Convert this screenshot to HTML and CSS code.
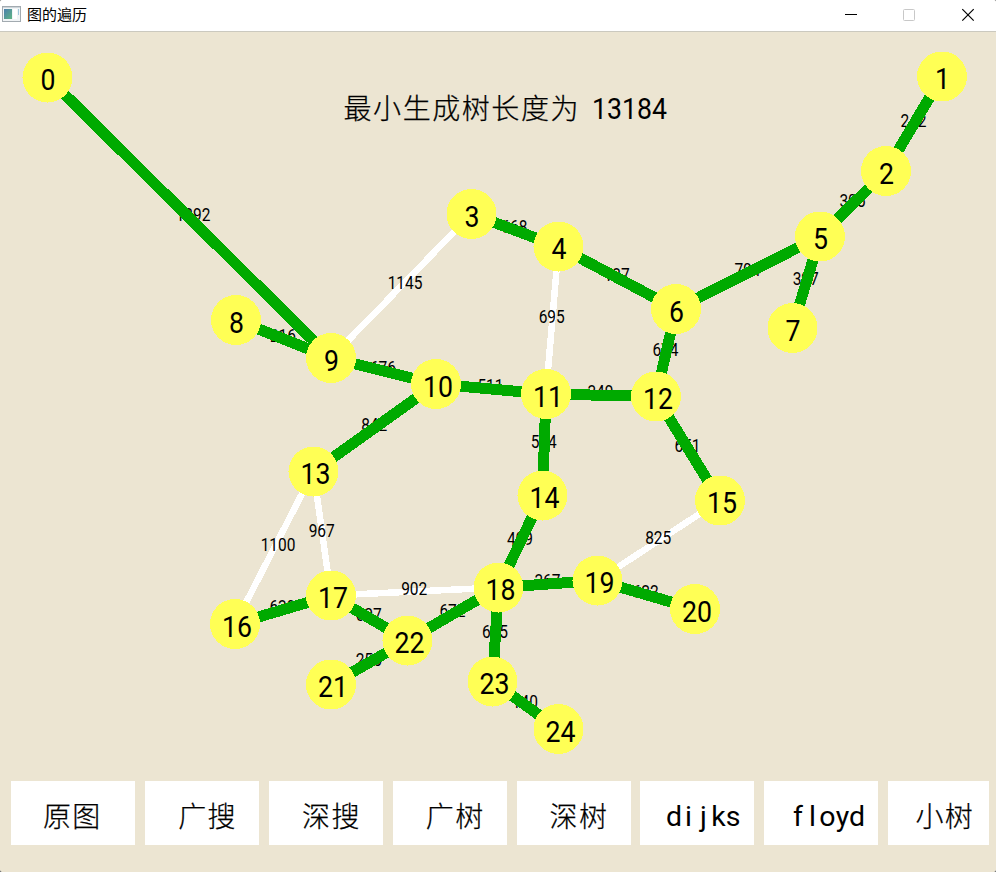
FILE: index.html
```html
<!DOCTYPE html>
<html lang="zh-CN">
<head>
<meta charset="utf-8">
<title>图的遍历</title>
<link rel="stylesheet" href="styles.css">
</head>
<body>
<div class="window">
  <header class="titlebar">
    <svg class="app-icon" width="19" height="16" viewBox="0 0 19 16">
      <defs><linearGradient id="pane" x1="0" y1="0" x2="1" y2="1"><stop offset="0" stop-color="#4b7fae"/><stop offset="1" stop-color="#5fb583"/></linearGradient></defs>
      <rect x=".5" y=".5" width="18" height="15" fill="#f1f4f6" stroke="#a2aab0"/>
      <rect x="1" y="1" width="17" height="1" fill="#cdd5da"/>
      <rect x="2" y="3" width="8" height="10" fill="url(#pane)"/>
      <rect x="11" y="3" width="4" height="10" fill="#fff"/>
      <rect x="16" y="3" width="1" height="6" fill="#9fc6dc"/>
    </svg>
    <h1 class="title">图的遍历</h1>
    <div class="controls">
      <svg width="58" height="31" viewBox="0 0 58 31"><path d="M17 14.5h12" stroke="#000"/></svg>
      <svg width="58" height="31" viewBox="0 0 58 31"><rect x="17.5" y="9.5" width="11" height="11" rx="1" fill="none" stroke="#c8c8c8"/></svg>
      <svg width="52" height="31" viewBox="0 0 52 31"><path d="M18.3 9.2l11.4 11.4M29.7 9.2L18.3 20.6" stroke="#000" stroke-width="1.2"/></svg>
    </div>
  </header>
  <main class="stage">
    <svg class="graph" id="graph" width="996" height="749" viewBox="0 32 996 749">
      <g id="links" class="links"></g>
      <g id="weights" class="weights"></g>
      <g id="tree" class="tree"></g>
      <g id="nodes" class="nodes"></g>
      <text class="caption" x="343.5" y="119" textLength="235" lengthAdjust="spacing">最小生成树长度为</text>
      <text class="caption digits" x="592" y="119" textLength="75" lengthAdjust="spacingAndGlyphs">13184</text>
    </svg>
    <nav class="toolbar">
      <button class="btn first">原图</button>
      <button class="btn">广搜</button>
      <button class="btn">深搜</button>
      <button class="btn">广树</button>
      <button class="btn">深树</button>
      <button class="btn latin"><svg width="114" height="64"><text x="34 48.5 63.5 78.5 93" y="45">dijks</text></svg></button>
      <button class="btn latin"><svg width="114" height="64"><text x="34 48.5 63.5 78.5 93" y="45">floyd</text></svg></button>
      <button class="btn last">小树</button>
    </nav>
  </main>
</div>
<script src="graph.js"></script>
</body>
</html>
```
FILE: styles.css
```css
* { box-sizing: border-box; }
body {
  margin: 0;
  background: #3d4650;
  font-family: "Noto Sans CJK SC", sans-serif;
  color: #000;
}
.window {
  width: 996px;
  height: 872px;
  display: flex;
  flex-direction: column;
  overflow: hidden;
  border-radius: 2px;
  background: #ece5d2;
}
.titlebar {
  height: 32px;
  flex: none;
  display: flex;
  align-items: flex-start;
  padding-left: 2px;
  background: #fff;
  border-bottom: 1px solid #cbc9bf;
}
.app-icon { margin-top: 6px; }
.title {
  margin: 0 0 0 6px;
  font-size: 15px;
  font-weight: 400;
  line-height: 27px;
}
.controls { display: flex; margin-left: auto; }
.stage { display: flex; flex-direction: column; }
.graph { display: block; flex: none; }
.links { stroke: #fff; stroke-width: 6.5; shape-rendering: crispEdges; }
.tree { stroke: #00aa00; stroke-width: 11; shape-rendering: crispEdges; }
.weights { font: 18.5px Roboto, sans-serif; }
.nodes { font: 30px Roboto, sans-serif; text-anchor: middle; }
.nodes circle { fill: #ffff55; shape-rendering: crispEdges; }
.caption { font: 300 28px "Noto Sans CJK SC", sans-serif; stroke: #000; stroke-width: .25; }
.caption.digits { font: 29.5px Roboto, sans-serif; stroke: none; }
.toolbar {
  display: grid;
  grid-template-columns: 124px repeat(6, 114px) 101px;
  column-gap: 9.8px;
  padding-left: 11.4px;
}
.btn {
  height: 64px;
  border: 0;
  padding: 3px 0 0 33px;
  background: #fff;
  color: #000;
  font: 300 28px/60px "Noto Sans CJK SC", sans-serif;
  -webkit-text-stroke: .25px #000;
  letter-spacing: 1.4px;
  text-align: left;
  white-space: nowrap;
}
.btn.first { padding-left: 31.5px; }
.btn.last { padding-left: 27.5px; }
.btn.latin { padding: 0; line-height: 0; letter-spacing: 0; -webkit-text-stroke: 0; }
.btn.latin text { font: 28.5px Roboto, sans-serif; text-anchor: middle; }
```
FILE: graph.js
```js
const nodes = [
  [47.5, 77.5], [942, 76.5], [886, 171], [471.5, 214], [558.5, 246.5],
  [820, 236.5], [676, 309], [792.5, 328], [236, 320], [331, 358],
  [436, 384], [546, 394], [656, 396.5], [313.5, 471.5], [542.5, 495.5],
  [720, 500.5], [235, 624], [331, 595.5], [498.5, 587.5], [597.5, 580.5],
  [695, 609], [331, 684.5], [407.5, 640.5], [492.5, 681.5], [558.5, 729]
];
// from, to, weight, in spanning tree
const edges = [
  [0, 9, 1892, 1], [1, 2, 242, 1], [2, 5, 305, 1], [5, 7, 397, 1],
  [5, 6, 704, 1], [3, 4, 668, 1], [4, 6, 137, 1], [3, 9, 1145, 0],
  [4, 11, 695, 0], [6, 12, 674, 1], [8, 9, 216, 1], [9, 10, 676, 1],
  [10, 11, 511, 1], [11, 12, 349, 1], [10, 13, 842, 1], [11, 14, 534, 1],
  [12, 15, 651, 1], [13, 16, 1100, 0], [13, 17, 967, 0], [15, 19, 825, 0],
  [14, 18, 409, 1], [17, 18, 902, 0], [18, 19, 367, 1], [19, 20, 622, 1],
  [16, 17, 639, 1], [17, 22, 607, 1], [18, 22, 672, 1], [21, 22, 255, 1],
  [18, 23, 675, 1], [23, 24, 140, 1]
];

function add(parent, tag, attrs, text) {
  const el = document.createElementNS("http://www.w3.org/2000/svg", tag);
  for (const k in attrs) el.setAttribute(k, attrs[k]);
  if (text !== undefined) el.textContent = text;
  document.getElementById(parent).appendChild(el);
}

for (const [a, b, w, inTree] of edges) {
  const [x1, y1] = nodes[a], [x2, y2] = nodes[b];
  add(inTree ? "tree" : "links", "line", { x1, y1, x2, y2 });
  add("weights", "text", {
    x: (x1 + x2) / 2 - 13.6, y: (y1 + y2) / 2 + 3.2,
    textLength: String(w).length * 8.7, lengthAdjust: "spacingAndGlyphs"
  }, w);
}
nodes.forEach(([x, y], i) => {
  add("nodes", "circle", { cx: x, cy: y, r: 25 });
  add("nodes", "text", {
    x: x + (i > 9 ? 2 : 0.5), y: y + 12.5,
    textLength: i > 9 ? 30 : 15, lengthAdjust: "spacingAndGlyphs"
  }, i);
});
```
